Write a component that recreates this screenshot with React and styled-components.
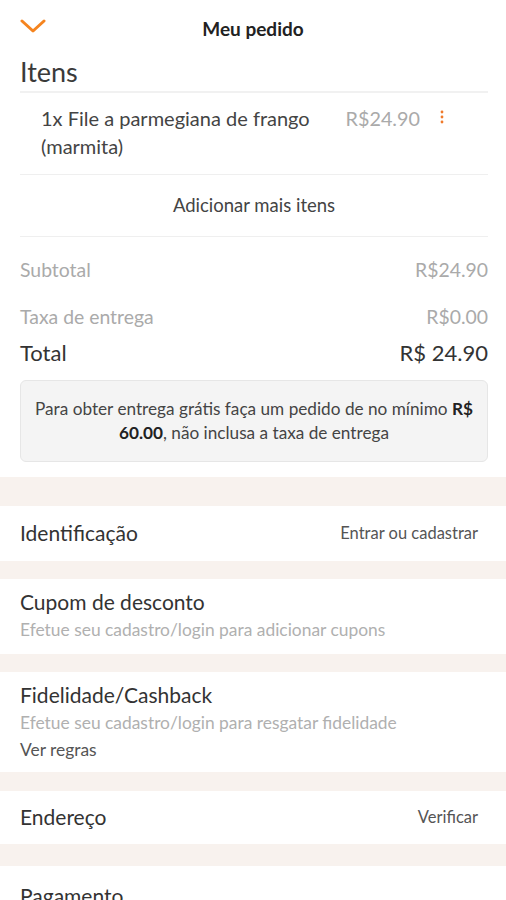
import styled, { createGlobalStyle } from "styled-components"

const Global = createGlobalStyle`
    body {
        margin: 0;
        background: #fff;
        font-family: Lato, "Noto Sans", sans-serif;
        color: #333;
    }
`

const Pagina = styled.div`
    width: 506px;
    overflow: hidden;
`

const Cabecalho = styled.header`
    height: 56px;
    display: grid;
    grid-template-columns: 1fr auto 1fr;
    align-items: center;
    padding: 0 20px;
`

const Voltar = styled.svg`
    width: 26px;
    height: 16px;
    margin-top: -4px;
`

const TituloPagina = styled.h1`
    margin: 0;
    font-size: 19px;
    font-weight: 700;
    color: #222;
`

const Bloco = styled.section`
    padding: 0 18px 0 20px;
`

const TituloSecao = styled.h2`
    margin: 0;
    font-size: 27px;
    font-weight: 400;
    line-height: 32px;
    color: #3a3a3a;
    padding-bottom: 3px;
    border-bottom: 2px solid #f1f1f1;
`

const LinhaItem = styled.div`
    display: flex;
    align-items: flex-start;
    padding: 11px 0 14px 21px;
    border-bottom: 1px solid #efefef;
`

const NomeItem = styled.div`
    flex: 1;
    font-size: 20px;
    line-height: 28px;
    color: #444;
`

const PrecoItem = styled.div`
    font-size: 19.8px;
    line-height: 28px;
    color: #aaa;
    margin-left: 20px;
`

const Opcoes = styled.svg`
    width: 4px;
    height: 14px;
    margin: 6px 44px 0 20px;
`

const Adicionar = styled.div`
    text-align: center;
    font-size: 18.5px;
    line-height: 61px;
    color: #444;
    border-bottom: 1px solid #efefef;
`

const Resumo = styled.div`
    display: flex;
    flex-direction: column;
    padding-top: 21px;
`

const LinhaResumo = styled.div`
    display: flex;
    justify-content: space-between;
    font-size: ${(p) => (p.$total ? "22px" : "19.4px")};
    line-height: ${(p) => (p.$total ? "26px" : "24px")};
    color: ${(p) => (p.$total ? "#333" : "#aaa")};
    margin-top: ${(p) => p.$acima}px;
`

const Aviso = styled.div`
    margin-top: 14px;
    background: #f4f4f4;
    border: 1px solid #e6e6e6;
    border-radius: 6px;
    padding: 16px 2px;
    text-align: center;
    font-size: 17.2px;
    line-height: 24px;
    color: #444;

    b {
        color: #222;
    }
`

const Faixa = styled.div`
    height: ${(p) => p.$altura}px;
    margin-top: ${(p) => p.$acima || 0}px;
    background: #f8f2ee;
`

const Cartao = styled.div`
    padding: ${(p) => p.$pad};
    padding-left: 20px;
    padding-right: 28px;
    display: flex;
    flex-direction: column;
`

const LinhaCartao = styled.div`
    display: flex;
    justify-content: space-between;
    align-items: center;
`

const TituloCartao = styled.div`
    font-size: 21px;
    line-height: 28px;
    color: #333;
`

const Acao = styled.div`
    font-size: 16.5px;
    color: #555;
`

const Dica = styled.div`
    font-size: 17.4px;
    line-height: 27px;
    color: ${(p) => (p.$escuro ? "#555" : "#b0b0b0")};
`

function App() {
    return (
        <Pagina>
            <Global />
            <Cabecalho>
                <Voltar viewBox="0 0 26 16">
                    <polyline points="2,3 13,13 24,3" fill="none" stroke="#f5841f" strokeWidth="3" strokeLinecap="round" strokeLinejoin="round" />
                </Voltar>
                <TituloPagina>Meu pedido</TituloPagina>
                <span />
            </Cabecalho>
            <Bloco>
                <TituloSecao>Itens</TituloSecao>
                <LinhaItem>
                    <NomeItem>1x File a parmegiana de frango (marmita)</NomeItem>
                    <PrecoItem>R$24.90</PrecoItem>
                    <Opcoes viewBox="0 0 4 14">
                        <circle cx="2" cy="2" r="1.4" fill="#f07a2a" />
                        <circle cx="2" cy="7" r="1.4" fill="#f07a2a" />
                        <circle cx="2" cy="12" r="1.4" fill="#f07a2a" />
                    </Opcoes>
                </LinhaItem>
                <Adicionar>Adicionar mais itens</Adicionar>
                <Resumo>
                    <LinhaResumo $acima={0}>
                        <span>Subtotal</span>
                        <span>R$24.90</span>
                    </LinhaResumo>
                    <LinhaResumo $acima={23}>
                        <span>Taxa de entrega</span>
                        <span>R$0.00</span>
                    </LinhaResumo>
                    <LinhaResumo $acima={11} $total>
                        <span>Total</span>
                        <span>R$ 24.90</span>
                    </LinhaResumo>
                </Resumo>
                <Aviso>
                    Para obter entrega grátis faça um pedido de no mínimo <b>R$ 60.00</b>, não inclusa a taxa de entrega
                </Aviso>
            </Bloco>
            <Faixa $altura={29} $acima={15} />
            <Cartao $pad="13px 0 14px">
                <LinhaCartao>
                    <TituloCartao>Identificação</TituloCartao>
                    <Acao>Entrar ou cadastrar</Acao>
                </LinhaCartao>
            </Cartao>
            <Faixa $altura={18} />
            <Cartao $pad="9px 0 11px">
                <TituloCartao>Cupom de desconto</TituloCartao>
                <Dica>Efetue seu cadastro/login para adicionar cupons</Dica>
            </Cartao>
            <Faixa $altura={18} />
            <Cartao $pad="9px 0 9px">
                <TituloCartao>Fidelidade/Cashback</TituloCartao>
                <Dica>Efetue seu cadastro/login para resgatar fidelidade</Dica>
                <Dica $escuro>Ver regras</Dica>
            </Cartao>
            <Faixa $altura={19} />
            <Cartao $pad="12px 0 13px">
                <LinhaCartao>
                    <TituloCartao>Endereço</TituloCartao>
                    <Acao>Verificar</Acao>
                </LinhaCartao>
            </Cartao>
            <Faixa $altura={22} />
            <Cartao $pad="16px 0">
                <TituloCartao>Pagamento</TituloCartao>
            </Cartao>
        </Pagina>
    )
}

export default App
